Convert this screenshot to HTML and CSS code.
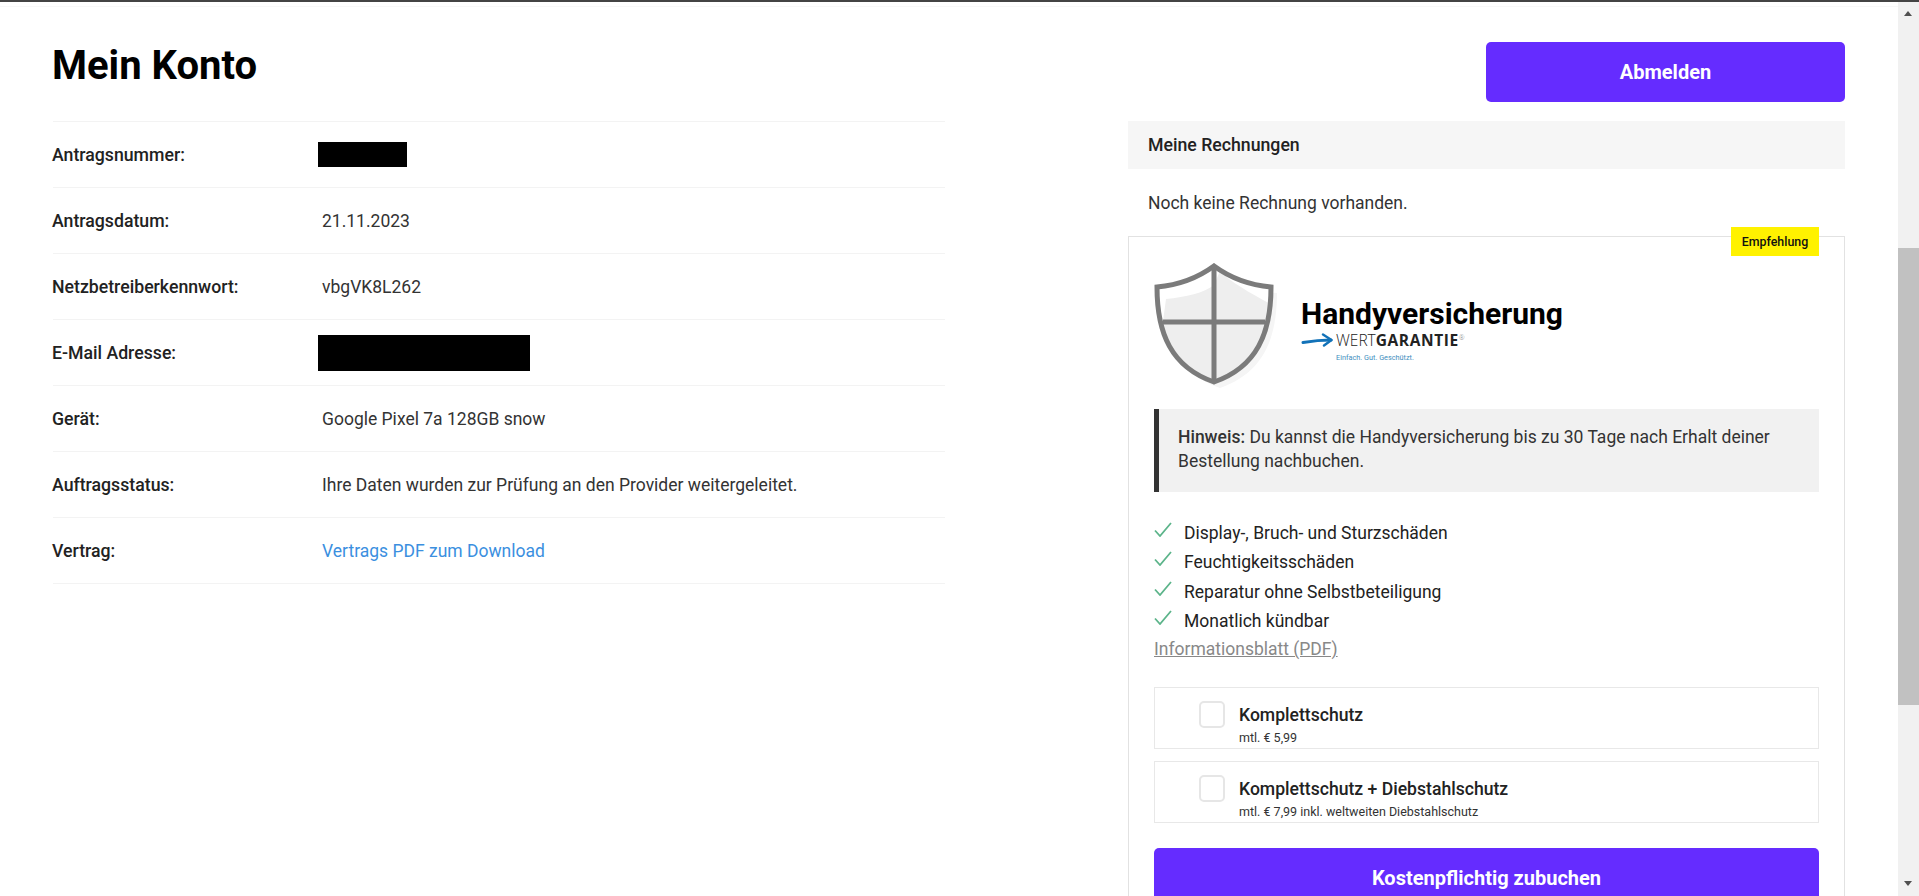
FILE: index.html
```html
<!DOCTYPE html>
<html lang="de">
<head>
    <meta charset="UTF-8">
    <meta name="viewport" content="width=device-width, initial-scale=1.0">
    <title>Mein Konto</title>
    <link rel="stylesheet" href="styles.css">
</head>
<body>

<div class="window">
    <div class="page">
        <div class="top-line"></div>
        <div class="columns">
            <section class="col-left">
                <div class="head-left">
                    <h1>Mein Konto</h1>
                </div>
                <div class="row">
                    <span class="row-label">Antragsnummer:</span>
                    <span class="redacted redacted-small"></span>
                </div>
                <div class="row">
                    <span class="row-label">Antragsdatum:</span>
                    <span>21.11.2023</span>
                </div>
                <div class="row">
                    <span class="row-label">Netzbetreiberkennwort:</span>
                    <span>vbgVK8L262</span>
                </div>
                <div class="row">
                    <span class="row-label">E-Mail Adresse:</span>
                    <span class="redacted redacted-large"></span>
                </div>
                <div class="row">
                    <span class="row-label">Gerät:</span>
                    <span>Google Pixel 7a 128GB snow</span>
                </div>
                <div class="row">
                    <span class="row-label">Auftragsstatus:</span>
                    <span>Ihre Daten wurden zur Prüfung an den Provider weitergeleitet.</span>
                </div>
                <div class="row row-last">
                    <span class="row-label">Vertrag:</span>
                    <a class="row-link" href="#">Vertrags PDF zum Download</a>
                </div>
            </section>

            <section class="col-right">
                <div class="head-right">
                    <button class="btn btn-logout">Abmelden</button>
                </div>
                <div class="invoices-head">Meine Rechnungen</div>
                <p class="invoices-empty">Noch keine Rechnung vorhanden.</p>

                <div class="insurance">
                    <span class="badge">Empfehlung</span>

                    <div class="logo-row">
                        <svg class="shield" viewBox="0 0 130 130" width="130" height="130">
                            <defs>
                                <clipPath id="shieldClip">
                                    <path d="M60 3C45 14 25 22 3 24C3 70 17 104 60 119C103 104 117 70 117 24C95 22 75 14 60 3Z"/>
                                </clipPath>
                            </defs>
                            <path fill="#f5f5f5" d="M66 9C51 20 31 28 9 30C9 76 23 110 66 125C109 110 123 76 123 30C101 28 81 20 66 9Z"/>
                            <path fill="#ffffff" d="M60 3C45 14 25 22 3 24C3 70 17 104 60 119C103 104 117 70 117 24C95 22 75 14 60 3Z"/>
                            <path fill="#eeeeee" clip-path="url(#shieldClip)" d="M12 36C32 34 50 30 60 22L66 8C78 20 96 30 122 44L122 125L0 125Z"/>
                            <path fill="none" stroke="#7b7b7b" stroke-width="5" stroke-linejoin="miter" d="M60 3C45 14 25 22 3 24C3 70 17 104 60 119C103 104 117 70 117 24C95 22 75 14 60 3Z"/>
                            <path fill="none" stroke="#7b7b7b" stroke-width="5" d="M60 3V119M9 59H111"/>
                        </svg>
                        <div class="logo-text">
                            <div class="logo-title">Handyversicherung</div>
                            <div class="brand">
                                <svg class="brand-arrow" viewBox="0 0 32 14" width="32" height="14">
                                    <path fill="none" stroke="#1272b8" stroke-width="3" stroke-linecap="round" d="M2 9.5C11 8 20 7 30 7"/>
                                    <path fill="none" stroke="#1272b8" stroke-width="2.4" stroke-linecap="round" stroke-linejoin="round" d="M22 1.500L30.500 7L23 12.500"/>
                                </svg>
                                <span class="brand-name">WERT<b>GARANTIE</b><sup>®</sup></span>
                            </div>
                            <div class="brand-tagline">Einfach. Gut. Geschützt.</div>
                        </div>
                    </div>

                    <div class="note"><b>Hinweis:</b> Du kannst die Handyversicherung bis zu 30 Tage nach Erhalt deiner Bestellung nachbuchen.</div>

                    <ul class="checks">
                        <li>
                            <svg viewBox="0 0 18 15" width="18" height="15"><path fill="none" stroke="#5cb48a" stroke-width="1.800" d="M1 8.500L6 14L17 1"/></svg>
                            Display-, Bruch- und Sturzschäden
                        </li>
                        <li>
                            <svg viewBox="0 0 18 15" width="18" height="15"><path fill="none" stroke="#5cb48a" stroke-width="1.800" d="M1 8.500L6 14L17 1"/></svg>
                            Feuchtigkeitsschäden
                        </li>
                        <li>
                            <svg viewBox="0 0 18 15" width="18" height="15"><path fill="none" stroke="#5cb48a" stroke-width="1.800" d="M1 8.500L6 14L17 1"/></svg>
                            Reparatur ohne Selbstbeteiligung
                        </li>
                        <li>
                            <svg viewBox="0 0 18 15" width="18" height="15"><path fill="none" stroke="#5cb48a" stroke-width="1.800" d="M1 8.500L6 14L17 1"/></svg>
                            Monatlich kündbar
                        </li>
                    </ul>
                    <a class="info-link" href="#">Informationsblatt (PDF)</a>

                    <label class="option">
                        <input type="checkbox">
                        <span>
                            <span class="option-title">Komplettschutz</span>
                            <span class="option-sub">mtl. € 5,99</span>
                        </span>
                    </label>
                    <label class="option">
                        <input type="checkbox">
                        <span>
                            <span class="option-title">Komplettschutz + Diebstahlschutz</span>
                            <span class="option-sub">mtl. € 7,99 inkl. weltweiten Diebstahlschutz</span>
                        </span>
                    </label>

                    <button class="btn btn-book">Kostenpflichtig zubuchen</button>
                </div>
            </section>
        </div>
    </div>

    <div class="scrollbar">
        <span class="arrow-up"></span>
        <span class="thumb"></span>
        <span class="arrow-down"></span>
    </div>
</div>

</body>
</html>
```

FILE: styles.css
```css
* {
    box-sizing: border-box;
}
body {
    margin: 0;
    height: 896px;
    overflow: hidden;
    font-family: Roboto, Arial, sans-serif;
    font-size: 17.5px;
    color: #333;
    background-color: #fff;
    border-top: 2px solid #444;
}
.window {
    display: flex;
    height: 894px;
}
.page {
    flex: 1;
    min-width: 0;
    overflow: hidden;
}
.top-line {
    height: 5px;
    border-bottom: 1px solid #f8f8f8;
}
.columns {
    display: flex;
    justify-content: space-between;
    padding: 0 53px;
}
.col-left {
    width: 892px;
}
.col-right {
    width: 717px;
}
.head-left {
    height: 114px;
    padding-top: 37px;
}
h1 {
    margin: 0 0 0 -1px;
    font-size: 40px;
    line-height: 44px;
    font-weight: 700;
    color: #000;
}
.head-right {
    display: flex;
    justify-content: flex-end;
    height: 114px;
    padding-top: 35px;
}
.row {
    display: grid;
    grid-template-columns: 269px 1fr;
    align-items: center;
    height: 66px;
    border-top: 1px solid #f3f3f3;
}
.row-last {
    height: 67px;
    border-bottom: 1px solid #f3f3f3;
}
.row-label {
    margin-left: -1px;
    font-size: 17.7px;
    font-weight: 500;
    color: #222;
}
.row-link {
    color: #3b8fdf;
    text-decoration: none;
}
.redacted {
    display: block;
    margin-left: -4px;
    background-color: #000;
}
.redacted-small {
    width: 89px;
    height: 25px;
}
.redacted-large {
    width: 212px;
    height: 36px;
}
.btn {
    display: block;
    border: none;
    border-radius: 5px;
    background-color: #652cff;
    color: #fff;
    font-family: inherit;
    font-weight: 700;
    cursor: pointer;
}
.btn-logout {
    width: 359px;
    height: 60px;
    font-size: 20px;
}
.btn-book {
    width: 100%;
    height: 60px;
    margin-top: 25px;
    font-size: 20px;
}
.invoices-head {
    height: 48px;
    padding-left: 20px;
    line-height: 48px;
    font-size: 17.7px;
    font-weight: 500;
    color: #222;
    background-color: #f6f6f6;
}
.invoices-empty {
    height: 67px;
    margin: 0;
    padding-left: 20px;
    line-height: 68px;
}
.insurance {
    position: relative;
    padding: 26px 25px 0;
    border: 1px solid #e2e2e2;
    border-bottom: none;
}
.badge {
    position: absolute;
    top: -10px;
    right: 25px;
    width: 88px;
    height: 29px;
    line-height: 29px;
    text-align: center;
    font-size: 12.4px;
    font-weight: 500;
    color: #111;
    background-color: #fff200;
}
.logo-row {
    display: flex;
    gap: 18px;
    height: 120px;
}
.shield {
    flex: none;
}
.logo-text {
    margin-left: -1px;
    padding-top: 33px;
}
.logo-title {
    font-size: 30px;
    line-height: 36px;
    font-weight: 700;
    color: #000;
}
.brand {
    display: flex;
    align-items: center;
    gap: 3px;
    height: 18px;
    margin-top: -1px;
}
.brand-name {
    font-family: "Open Sans", sans-serif;
    font-size: 15.5px;
    font-weight: 300;
    color: #222;
}
.brand-name b {
    font-weight: 700;
    letter-spacing: 0.6px;
}
.brand-name sup {
    font-size: 7px;
    color: #888;
}
.brand-tagline {
    margin: 3px 0 0 35px;
    font-size: 7.3px;
    line-height: 12px;
    color: #3f8fc0;
}
.note {
    height: 83px;
    margin-top: 26px;
    padding: 17px 10px 0 19px;
    line-height: 23.5px;
    border-left: 5px solid #333;
    background-color: #f1f1f1;
}
.note b {
    font-weight: 500;
}
.checks {
    margin: 27px 0 0;
    padding: 0;
    list-style: none;
}
.checks li {
    display: flex;
    align-items: flex-start;
    gap: 12px;
    height: 29.3px;
    line-height: 29.3px;
    color: #222;
}
.checks svg {
    flex: none;
    margin-top: 3px;
}
.info-link {
    display: block;
    line-height: 26px;
    color: #888;
}
.option {
    display: flex;
    gap: 14px;
    height: 62px;
    margin-top: 12px;
    padding: 13px 0 0 45px;
    border: 1px solid #e8e8e8;
}
.info-link + .option {
    margin-top: 25px;
}
.option input {
    appearance: none;
    flex: none;
    width: 26px;
    height: 27px;
    margin: 0 0 0 -1px;
    background-color: #fff;
    border: 2px solid #e6e6e6;
    border-radius: 5px;
}
.option-title {
    display: block;
    font-size: 17.6px;
    line-height: 28px;
    font-weight: 500;
    color: #222;
}
.option-sub {
    display: block;
    font-size: 12.5px;
    line-height: 18px;
}
.scrollbar {
    position: relative;
    flex: none;
    width: 21px;
    background-color: #f1f1f1;
}
.thumb {
    display: block;
    height: 457px;
    margin-top: 246px;
    background-color: #c1c1c1;
}
.arrow-up,
.arrow-down {
    position: absolute;
    left: 6px;
    width: 0;
    height: 0;
    border-left: 4.500px solid transparent;
    border-right: 4.500px solid transparent;
}
.arrow-up {
    top: 9px;
    border-bottom: 5px solid #505050;
}
.arrow-down {
    top: 879px;
    border-top: 5px solid #505050;
}
```
